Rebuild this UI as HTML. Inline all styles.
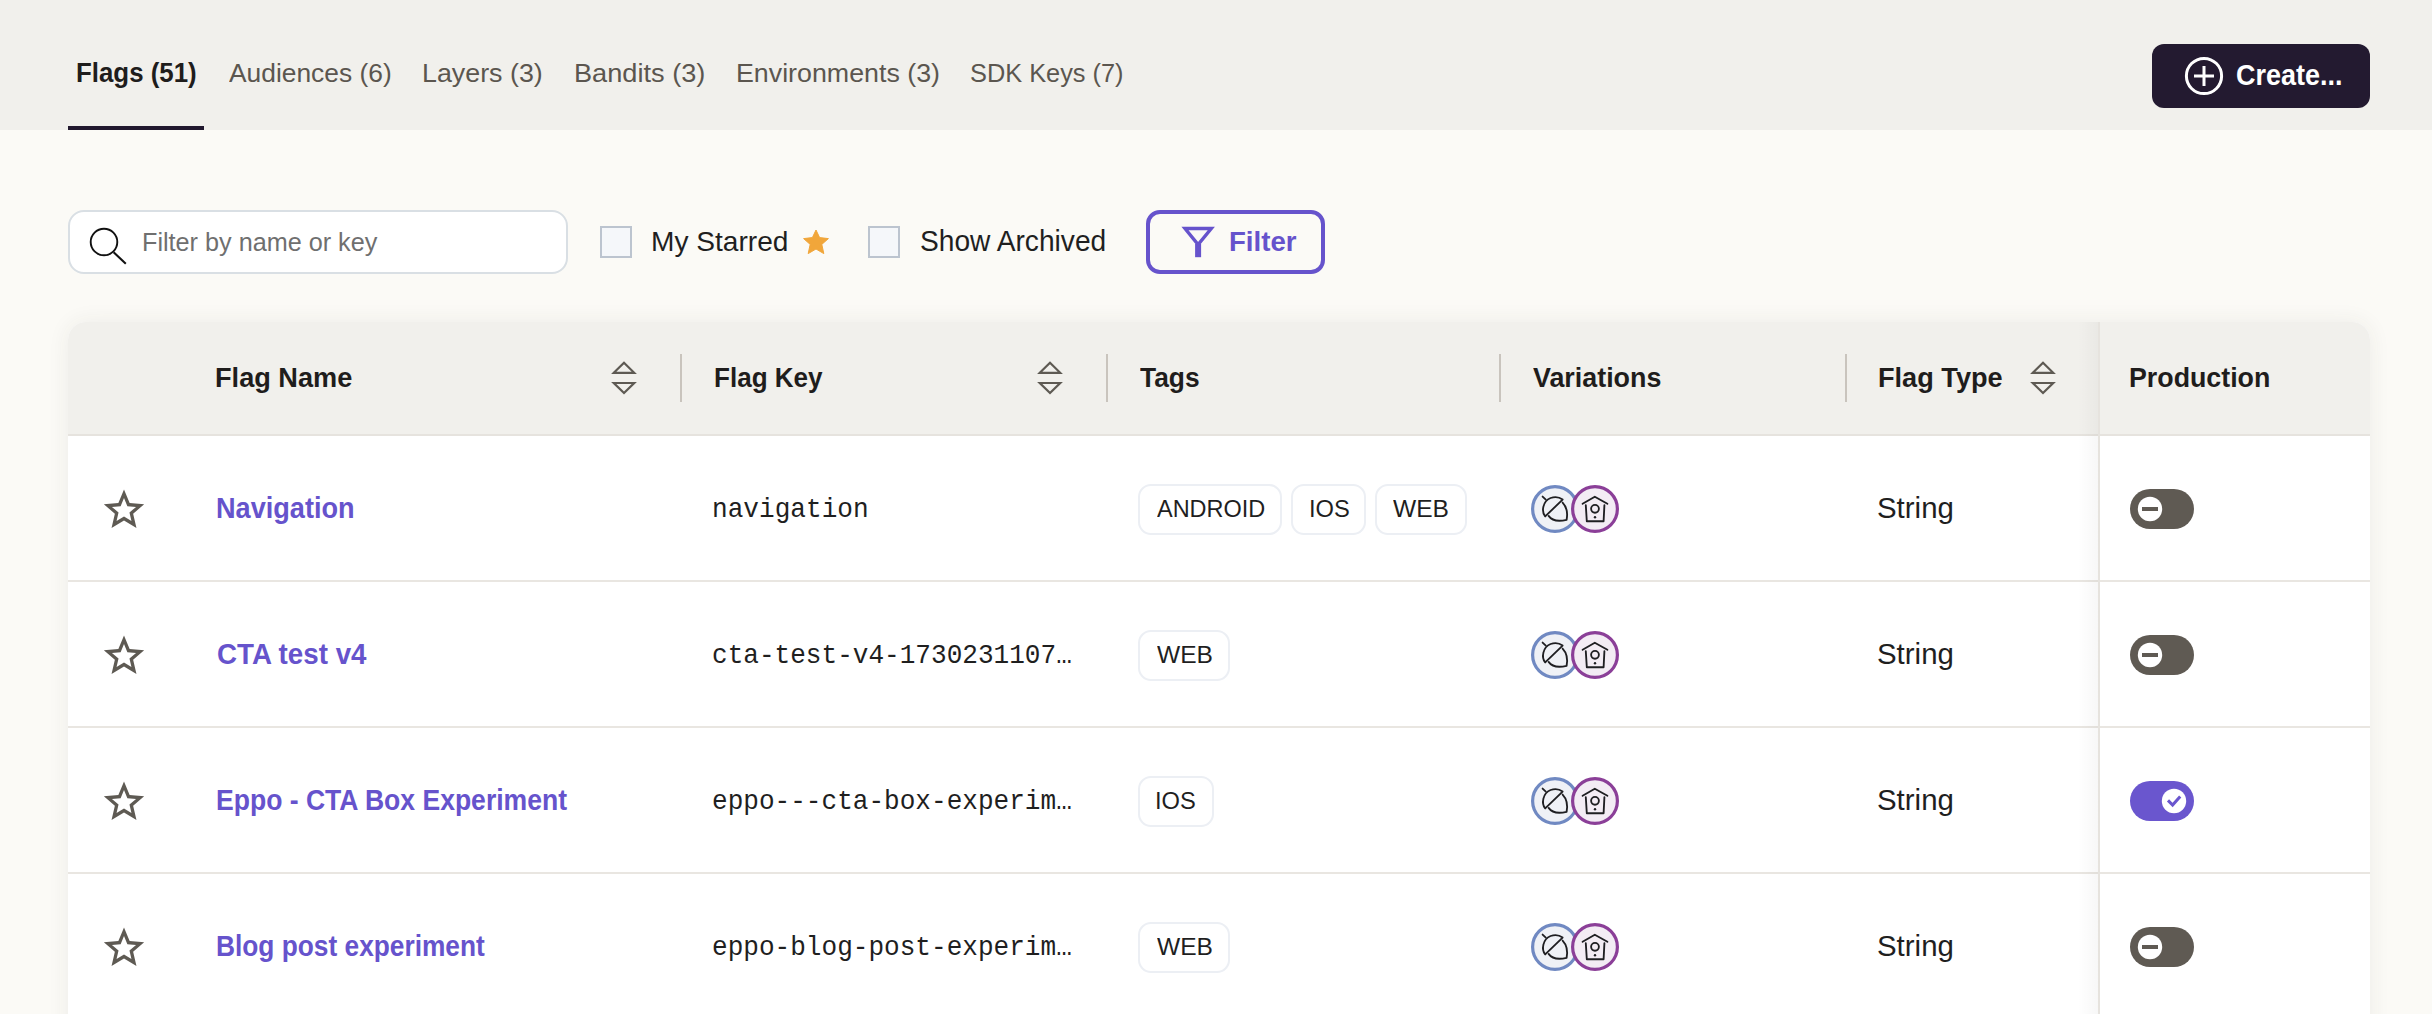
<!DOCTYPE html>
<html><head><meta charset="utf-8">
<style>
html,body{margin:0;padding:0}
body{width:2432px;height:1014px;overflow:hidden;position:relative;background:#fbfaf6;font-family:"Liberation Sans",sans-serif}
.a{position:absolute;box-sizing:border-box}
.tx{position:absolute;line-height:1;white-space:pre;transform-origin:0 0}
svg{position:absolute;overflow:visible}
</style></head><body>
<!-- top bar -->
<div class="a" style="left:0;top:0;width:2432px;height:130px;background:#f1f0ec"></div>
<div class="a" style="left:68px;top:126px;width:136px;height:4px;background:#21182e"></div>
<!-- create button -->
<div class="a" style="left:2152px;top:44px;width:218px;height:64px;border-radius:12px;background:#231a30"></div>
<svg style="left:0;top:0" width="2432" height="1014" viewBox="0 0 2432 1014">
  <circle cx="2204" cy="76" r="17.6" fill="none" stroke="#fff" stroke-width="3"/>
  <path d="M2194 76H2214M2204 66V86" stroke="#fff" stroke-width="3" fill="none"/>
</svg>
<!-- search -->
<div class="a" style="left:68px;top:210px;width:500px;height:64px;border:2px solid #d9dfe4;border-radius:16px;background:#fff"></div>
<svg style="left:0;top:0" width="2432" height="1014" viewBox="0 0 2432 1014">
  <circle cx="104" cy="242" r="13.3" fill="none" stroke="#111" stroke-width="1.9"/>
  <path d="M113.6 252.2L125.8 263.8" stroke="#111" stroke-width="2.1" fill="none"/>
</svg>
<!-- checkboxes -->
<div class="a" style="left:600px;top:226px;width:32px;height:32px;border:2px solid #bcc4cf;background:#f5f7fa"></div>
<div class="a" style="left:868px;top:226px;width:32px;height:32px;border:2px solid #bcc4cf;background:#f5f7fa"></div>
<svg style="left:0;top:0" width="2432" height="1014" viewBox="0 0 2432 1014">
  <path d="M816 230 L819.6 237.6 L828.4 238.6 L821.8 244.4 L823.8 253.6 L816 249 L808.2 253.6 L810.2 244.4 L803.6 238.6 L812.4 237.6 Z" fill="#f1a63a" stroke="#f1a63a" stroke-width="1" stroke-linejoin="round"/>
</svg>
<!-- filter button -->
<div class="a" style="left:1146px;top:210px;width:179px;height:64px;border:4px solid #6653cc;border-radius:14px"></div>
<svg style="left:0;top:0" width="2432" height="1014" viewBox="0 0 2432 1014">
  <path d="M1185 228.5 H1211.3 L1198.1 244.5 Z" fill="none" stroke="#6653cc" stroke-width="3.4" stroke-linejoin="miter"/>
  <rect x="1195.1" y="244" width="6" height="13.2" fill="#6653cc"/>
</svg>

<!-- table -->
<div class="a" style="left:68px;top:322px;width:2302px;height:760px;border-radius:18px 18px 0 0;background:#fff;box-shadow:0 0 22px rgba(60,50,40,0.07)"></div>
<div class="a" style="left:68px;top:322px;width:2302px;height:112px;border-radius:18px 18px 0 0;background:#f1f0ec"></div>
<div class="a" style="left:68px;top:434px;width:2302px;height:2px;background:#e6e3de"></div>
<div class="a" style="left:68px;top:580px;width:2302px;height:2px;background:#e9e6e1"></div>
<div class="a" style="left:68px;top:726px;width:2302px;height:2px;background:#e9e6e1"></div>
<div class="a" style="left:68px;top:872px;width:2302px;height:2px;background:#e9e6e1"></div>
<!-- header separators -->
<div class="a" style="left:680px;top:354px;width:2px;height:48px;background:#c9c4bd"></div>
<div class="a" style="left:1106px;top:354px;width:2px;height:48px;background:#c9c4bd"></div>
<div class="a" style="left:1499px;top:354px;width:2px;height:48px;background:#c9c4bd"></div>
<div class="a" style="left:1845px;top:354px;width:2px;height:48px;background:#c9c4bd"></div>
<!-- production column sticky shadow -->
<div class="a" style="left:2078px;top:322px;width:20px;height:700px;background:linear-gradient(to right,rgba(0,0,0,0),rgba(0,0,0,0.03))"></div>
<div class="a" style="left:2098px;top:322px;width:2px;height:700px;background:#e6e3de"></div>
<svg style="left:0;top:0" width="2432" height="1014" viewBox="0 0 2432 1014">
  <g fill="none" stroke="#5e5a53" stroke-width="2.2" stroke-linejoin="miter">
    <path d="M613.8 372.8 L624 362.8 L634.2 372.8 Z"/>
    <path d="M613.8 383 L634.2 383 L624 393 Z"/>
    <path d="M1039.8 372.8 L1050 362.8 L1060.2 372.8 Z"/>
    <path d="M1039.8 383 L1060.2 383 L1050 393 Z"/>
    <path d="M2032.8 372.8 L2043 362.8 L2053.2 372.8 Z"/>
    <path d="M2032.8 383 L2053.2 383 L2043 393 Z"/>
  </g>
</svg>
<div class="a" style="left:1138.3px;top:483.5px;width:144.0px;height:51px;border:2px solid #eceff4;border-radius:13px;background:#fff"></div>
<div class="a" style="left:1290.9px;top:483.5px;width:75.4px;height:51px;border:2px solid #eceff4;border-radius:13px;background:#fff"></div>
<div class="a" style="left:1375.0px;top:483.5px;width:91.5px;height:51px;border:2px solid #eceff4;border-radius:13px;background:#fff"></div>
<div class="a" style="left:1138.1px;top:629.5px;width:91.7px;height:51px;border:2px solid #eceff4;border-radius:13px;background:#fff"></div>
<div class="a" style="left:1138.1px;top:775.5px;width:75.6px;height:51px;border:2px solid #eceff4;border-radius:13px;background:#fff"></div>
<div class="a" style="left:1138.1px;top:921.5px;width:91.7px;height:51px;border:2px solid #eceff4;border-radius:13px;background:#fff"></div>
<svg style="left:0;top:0" width="2432" height="1014" viewBox="0 0 2432 1014">
<path d="M124.00 489.60 L129.64 503.03 L144.16 504.25 L133.13 513.77 L136.46 527.95 L124.00 520.40 L111.54 527.95 L114.87 513.77 L103.84 504.25 L118.36 503.03 Z M124.00 498.12 L127.37 506.16 L136.06 506.88 L129.46 512.57 L131.45 521.06 L124.00 516.54 L116.55 521.06 L118.54 512.57 L111.94 506.88 L120.63 506.16 Z" fill="#5e5a53" fill-rule="evenodd"/>
<circle cx="1555" cy="509" r="22.4" fill="#eff1f6" stroke="#7089c2" stroke-width="3.2"/>
<circle cx="1595" cy="509" r="22.4" fill="#f3ecf4" stroke="#8b3f98" stroke-width="3.2"/>
<g fill="none" stroke="#1f1f22" stroke-width="1.85" stroke-linecap="round" stroke-linejoin="round" transform="translate(0 0)"><path d="M1542.6 496.6 L1545.8 499.6"/><path d="M1545.2 516.4 C1541.2 511.4 1542.6 501.4 1550.6 498 C1555 496.4 1559.8 497.4 1562.6 499.6 Z"/><path d="M1548.6 515.9 C1551.8 520.4 1557.6 522 1566.6 519.8 C1568 512.4 1566.8 507 1562.6 502.6"/><path d="M1582.6 503.8 L1594.8 496.8 L1607.4 503.8"/><path d="M1585.8 505.2 L1586.8 521.2 L1603.6 521.2 L1604.4 505.2"/><circle cx="1595" cy="508.8" r="3.9"/></g>
<circle cx="1595" cy="517.2" r="1.2" fill="#1f1f22"/>
<rect x="2130" y="489" width="64" height="40" rx="20" fill="#5f5a53"/>
<circle cx="2150" cy="509" r="12.2" fill="#fff"/>
<rect x="2142" y="507" width="16" height="4" fill="#5f5a53"/>
<path d="M124.00 635.60 L129.64 649.03 L144.16 650.25 L133.13 659.77 L136.46 673.95 L124.00 666.40 L111.54 673.95 L114.87 659.77 L103.84 650.25 L118.36 649.03 Z M124.00 644.12 L127.37 652.16 L136.06 652.88 L129.46 658.57 L131.45 667.06 L124.00 662.54 L116.55 667.06 L118.54 658.57 L111.94 652.88 L120.63 652.16 Z" fill="#5e5a53" fill-rule="evenodd"/>
<circle cx="1555" cy="655" r="22.4" fill="#eff1f6" stroke="#7089c2" stroke-width="3.2"/>
<circle cx="1595" cy="655" r="22.4" fill="#f3ecf4" stroke="#8b3f98" stroke-width="3.2"/>
<g fill="none" stroke="#1f1f22" stroke-width="1.85" stroke-linecap="round" stroke-linejoin="round" transform="translate(0 146)"><path d="M1542.6 496.6 L1545.8 499.6"/><path d="M1545.2 516.4 C1541.2 511.4 1542.6 501.4 1550.6 498 C1555 496.4 1559.8 497.4 1562.6 499.6 Z"/><path d="M1548.6 515.9 C1551.8 520.4 1557.6 522 1566.6 519.8 C1568 512.4 1566.8 507 1562.6 502.6"/><path d="M1582.6 503.8 L1594.8 496.8 L1607.4 503.8"/><path d="M1585.8 505.2 L1586.8 521.2 L1603.6 521.2 L1604.4 505.2"/><circle cx="1595" cy="508.8" r="3.9"/></g>
<circle cx="1595" cy="663.2" r="1.2" fill="#1f1f22"/>
<rect x="2130" y="635" width="64" height="40" rx="20" fill="#5f5a53"/>
<circle cx="2150" cy="655" r="12.2" fill="#fff"/>
<rect x="2142" y="653" width="16" height="4" fill="#5f5a53"/>
<path d="M124.00 781.60 L129.64 795.03 L144.16 796.25 L133.13 805.77 L136.46 819.95 L124.00 812.40 L111.54 819.95 L114.87 805.77 L103.84 796.25 L118.36 795.03 Z M124.00 790.12 L127.37 798.16 L136.06 798.88 L129.46 804.57 L131.45 813.06 L124.00 808.54 L116.55 813.06 L118.54 804.57 L111.94 798.88 L120.63 798.16 Z" fill="#5e5a53" fill-rule="evenodd"/>
<circle cx="1555" cy="801" r="22.4" fill="#eff1f6" stroke="#7089c2" stroke-width="3.2"/>
<circle cx="1595" cy="801" r="22.4" fill="#f3ecf4" stroke="#8b3f98" stroke-width="3.2"/>
<g fill="none" stroke="#1f1f22" stroke-width="1.85" stroke-linecap="round" stroke-linejoin="round" transform="translate(0 292)"><path d="M1542.6 496.6 L1545.8 499.6"/><path d="M1545.2 516.4 C1541.2 511.4 1542.6 501.4 1550.6 498 C1555 496.4 1559.8 497.4 1562.6 499.6 Z"/><path d="M1548.6 515.9 C1551.8 520.4 1557.6 522 1566.6 519.8 C1568 512.4 1566.8 507 1562.6 502.6"/><path d="M1582.6 503.8 L1594.8 496.8 L1607.4 503.8"/><path d="M1585.8 505.2 L1586.8 521.2 L1603.6 521.2 L1604.4 505.2"/><circle cx="1595" cy="508.8" r="3.9"/></g>
<circle cx="1595" cy="809.2" r="1.2" fill="#1f1f22"/>
<rect x="2130" y="781" width="64" height="40" rx="20" fill="#6a56ce"/>
<circle cx="2174" cy="801" r="12.2" fill="#fff"/>
<path d="M2168 800.4 L2172.6 805 L2180.2 796.4" fill="none" stroke="#6a56ce" stroke-width="3"/>
<path d="M124.00 927.60 L129.64 941.03 L144.16 942.25 L133.13 951.77 L136.46 965.95 L124.00 958.40 L111.54 965.95 L114.87 951.77 L103.84 942.25 L118.36 941.03 Z M124.00 936.12 L127.37 944.16 L136.06 944.88 L129.46 950.57 L131.45 959.06 L124.00 954.54 L116.55 959.06 L118.54 950.57 L111.94 944.88 L120.63 944.16 Z" fill="#5e5a53" fill-rule="evenodd"/>
<circle cx="1555" cy="947" r="22.4" fill="#eff1f6" stroke="#7089c2" stroke-width="3.2"/>
<circle cx="1595" cy="947" r="22.4" fill="#f3ecf4" stroke="#8b3f98" stroke-width="3.2"/>
<g fill="none" stroke="#1f1f22" stroke-width="1.85" stroke-linecap="round" stroke-linejoin="round" transform="translate(0 438)"><path d="M1542.6 496.6 L1545.8 499.6"/><path d="M1545.2 516.4 C1541.2 511.4 1542.6 501.4 1550.6 498 C1555 496.4 1559.8 497.4 1562.6 499.6 Z"/><path d="M1548.6 515.9 C1551.8 520.4 1557.6 522 1566.6 519.8 C1568 512.4 1566.8 507 1562.6 502.6"/><path d="M1582.6 503.8 L1594.8 496.8 L1607.4 503.8"/><path d="M1585.8 505.2 L1586.8 521.2 L1603.6 521.2 L1604.4 505.2"/><circle cx="1595" cy="508.8" r="3.9"/></g>
<circle cx="1595" cy="955.2" r="1.2" fill="#1f1f22"/>
<rect x="2130" y="927" width="64" height="40" rx="20" fill="#5f5a53"/>
<circle cx="2150" cy="947" r="12.2" fill="#fff"/>
<rect x="2142" y="945" width="16" height="4" fill="#5f5a53"/>
</svg>
<div class="tx" style="left:75.68px;top:60.20px;font-family:'Liberation Sans', sans-serif;font-weight:700;font-size:26.89px;color:#1f1d1c;transform:scaleX(0.9623)">Flags (51)</div>
<div class="tx" style="left:229.20px;top:60.00px;font-family:'Liberation Sans', sans-serif;font-weight:400;font-size:26.60px;color:#5b564f;transform:scaleX(0.9914)">Audiences (6)</div>
<div class="tx" style="left:421.98px;top:60.00px;font-family:'Liberation Sans', sans-serif;font-weight:400;font-size:26.60px;color:#5b564f;transform:scaleX(1.0086)">Layers (3)</div>
<div class="tx" style="left:573.76px;top:60.00px;font-family:'Liberation Sans', sans-serif;font-weight:400;font-size:26.60px;color:#5b564f;transform:scaleX(1.0216)">Bandits (3)</div>
<div class="tx" style="left:735.98px;top:60.00px;font-family:'Liberation Sans', sans-serif;font-weight:400;font-size:26.60px;color:#5b564f;transform:scaleX(1.0075)">Environments (3)</div>
<div class="tx" style="left:970.49px;top:60.00px;font-family:'Liberation Sans', sans-serif;font-weight:400;font-size:26.60px;color:#5b564f;transform:scaleX(0.9532)">SDK Keys (7)</div>
<div class="tx" style="left:2236.27px;top:61.00px;font-family:'Liberation Sans', sans-serif;font-weight:700;font-size:28.92px;color:#ffffff;transform:scaleX(0.9333)">Create...</div>
<div class="tx" style="left:141.57px;top:229.00px;font-family:'Liberation Sans', sans-serif;font-weight:400;font-size:26.16px;color:#6f6f6f;transform:scaleX(0.9636)">Filter by name or key</div>
<div class="tx" style="left:650.53px;top:226.80px;font-family:'Liberation Sans', sans-serif;font-weight:400;font-size:28.49px;color:#1f1f1f;transform:scaleX(0.9868)">My Starred</div>
<div class="tx" style="left:919.82px;top:227.30px;font-family:'Liberation Sans', sans-serif;font-weight:400;font-size:28.63px;color:#1f1f1f;transform:scaleX(0.9834)">Show Archived</div>
<div class="tx" style="left:1229.00px;top:228.00px;font-family:'Liberation Sans', sans-serif;font-weight:700;font-size:27.62px;color:#6653cc;transform:scaleX(1.0000)">Filter</div>
<div class="tx" style="left:215.38px;top:363.20px;font-family:'Liberation Sans', sans-serif;font-weight:700;font-size:28.34px;color:#1f1d1c;transform:scaleX(0.9586)">Flag Name</div>
<div class="tx" style="left:713.56px;top:363.20px;font-family:'Liberation Sans', sans-serif;font-weight:700;font-size:28.34px;color:#1f1d1c;transform:scaleX(0.9198)">Flag Key</div>
<div class="tx" style="left:1140.40px;top:363.20px;font-family:'Liberation Sans', sans-serif;font-weight:700;font-size:28.34px;color:#1f1d1c;transform:scaleX(0.9302)">Tags</div>
<div class="tx" style="left:1533.00px;top:363.20px;font-family:'Liberation Sans', sans-serif;font-weight:700;font-size:28.34px;color:#1f1d1c;transform:scaleX(0.9478)">Variations</div>
<div class="tx" style="left:1878.38px;top:363.20px;font-family:'Liberation Sans', sans-serif;font-weight:700;font-size:28.34px;color:#1f1d1c;transform:scaleX(0.9583)">Flag Type</div>
<div class="tx" style="left:2129.11px;top:363.20px;font-family:'Liberation Sans', sans-serif;font-weight:700;font-size:28.34px;color:#1f1d1c;transform:scaleX(0.9452)">Production</div>
<div class="tx" style="left:215.71px;top:494.30px;font-family:'Liberation Sans', sans-serif;font-weight:700;font-size:28.78px;color:#6653cc;transform:scaleX(0.9427)">Navigation</div>
<div class="tx" style="left:711.89px;top:496.10px;font-family:'Liberation Mono', monospace;font-weight:400;font-size:27.31px;color:#1f1f1f;transform:scaleX(0.9563)">navigation</div>
<div class="tx" style="left:1876.77px;top:494.20px;font-family:'Liberation Sans', sans-serif;font-weight:400;font-size:28.63px;color:#1f1f1f;transform:scaleX(1.0278)">String</div>
<div class="tx" style="left:1156.60px;top:497.20px;font-family:'Liberation Sans', sans-serif;font-weight:400;font-size:24.71px;color:#1f1f1f;transform:scaleX(0.9504)">ANDROID</div>
<div class="tx" style="left:1308.68px;top:497.20px;font-family:'Liberation Sans', sans-serif;font-weight:400;font-size:24.71px;color:#1f1f1f;transform:scaleX(0.9590)">IOS</div>
<div class="tx" style="left:1393.30px;top:497.20px;font-family:'Liberation Sans', sans-serif;font-weight:400;font-size:24.71px;color:#1f1f1f;transform:scaleX(0.9945)">WEB</div>
<div class="tx" style="left:216.64px;top:640.30px;font-family:'Liberation Sans', sans-serif;font-weight:700;font-size:28.78px;color:#6653cc;transform:scaleX(0.9643)">CTA test v4</div>
<div class="tx" style="left:711.89px;top:642.10px;font-family:'Liberation Mono', monospace;font-weight:400;font-size:27.31px;color:#1f1f1f;transform:scaleX(0.9550)">cta-test-v4-1730231107&#8230;</div>
<div class="tx" style="left:1876.77px;top:640.20px;font-family:'Liberation Sans', sans-serif;font-weight:400;font-size:28.63px;color:#1f1f1f;transform:scaleX(1.0278)">String</div>
<div class="tx" style="left:1156.60px;top:643.20px;font-family:'Liberation Sans', sans-serif;font-weight:400;font-size:24.71px;color:#1f1f1f;transform:scaleX(0.9945)">WEB</div>
<div class="tx" style="left:215.75px;top:786.30px;font-family:'Liberation Sans', sans-serif;font-weight:700;font-size:28.78px;color:#6653cc;transform:scaleX(0.9228)">Eppo - CTA Box Experiment</div>
<div class="tx" style="left:711.89px;top:788.10px;font-family:'Liberation Mono', monospace;font-weight:400;font-size:27.31px;color:#1f1f1f;transform:scaleX(0.9550)">eppo---cta-box-experim&#8230;</div>
<div class="tx" style="left:1876.77px;top:786.20px;font-family:'Liberation Sans', sans-serif;font-weight:400;font-size:28.63px;color:#1f1f1f;transform:scaleX(1.0278)">String</div>
<div class="tx" style="left:1154.68px;top:789.20px;font-family:'Liberation Sans', sans-serif;font-weight:400;font-size:24.71px;color:#1f1f1f;transform:scaleX(0.9590)">IOS</div>
<div class="tx" style="left:215.77px;top:932.30px;font-family:'Liberation Sans', sans-serif;font-weight:700;font-size:28.78px;color:#6653cc;transform:scaleX(0.9140)">Blog post experiment</div>
<div class="tx" style="left:711.89px;top:934.10px;font-family:'Liberation Mono', monospace;font-weight:400;font-size:27.31px;color:#1f1f1f;transform:scaleX(0.9550)">eppo-blog-post-experim&#8230;</div>
<div class="tx" style="left:1876.77px;top:932.20px;font-family:'Liberation Sans', sans-serif;font-weight:400;font-size:28.63px;color:#1f1f1f;transform:scaleX(1.0278)">String</div>
<div class="tx" style="left:1156.60px;top:935.20px;font-family:'Liberation Sans', sans-serif;font-weight:400;font-size:24.71px;color:#1f1f1f;transform:scaleX(0.9945)">WEB</div>
</body></html>
